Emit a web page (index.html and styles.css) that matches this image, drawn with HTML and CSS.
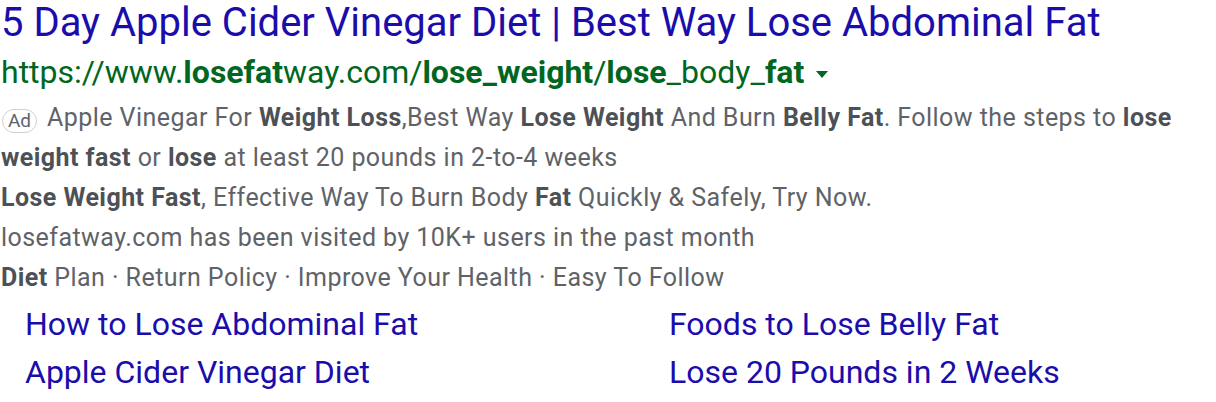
FILE: index.html
```html
<!DOCTYPE html>
<html>
<head>
<meta charset="utf-8">
<link rel="stylesheet" href="styles.css">
</head>
<body>
<div class="ad">
  <div class="title">5 Day Apple Cider Vinegar Diet | Best Way Lose Abdominal Fat</div>
  <div class="url">https://www.<b>losefat</b>way.com/<b>lose_weight</b>/<b>lose</b>_body_<b>fat</b><svg class="arrow" width="12" height="7" viewBox="0 0 12 7"><path d="M0 0H12L6 7Z" fill="#006621"/></svg></div>
  <div class="desc">
    <div class="line"><span class="badge">Ad</span>Apple Vinegar For <b>Weight Loss</b>,Best Way <b>Lose Weight</b> And Burn <b>Belly Fat</b>. Follow the steps to <b>lose</b></div>
    <div class="line"><b>weight fast</b> or <b>lose</b> at least 20 pounds in 2-to-4 weeks</div>
    <div class="line"><b>Lose Weight Fast</b>, Effective Way To Burn Body <b>Fat</b> Quickly &amp; Safely, Try Now.</div>
    <div class="line">losefatway.com has been visited by 10K+ users in the past month</div>
    <div class="line"><b>Diet</b> Plan · Return Policy · Improve Your Health · Easy To Follow</div>
  </div>
  <div class="sitelinks">
    <a>How to Lose Abdominal Fat</a>
    <a>Foods to Lose Belly Fat</a>
    <a>Apple Cider Vinegar Diet</a>
    <a>Lose 20 Pounds in 2 Weeks</a>
  </div>
</div>
</body>
</html>
```

FILE: styles.css
```css
html, body {
  margin: 0;
  padding: 0;
  background: #fff;
}
body {
  font-family: Roboto, "Noto Sans", Arial, sans-serif;
}
.ad {
  padding: 0 0 0 1px;
}
.title {
  color: #1a0dab;
  font-size: 40px;
  line-height: 46px;
  white-space: nowrap;
}
.url {
  color: #006621;
  font-size: 32px;
  line-height: 52px;
  white-space: nowrap;
  display: flex;
  align-items: center;
}
.url b {
  font-weight: 700;
}
.arrow {
  margin-left: 12px;
  margin-top: 4px;
}
.desc {
  color: #5f6368;
  font-size: 25px;
  letter-spacing: 0.45px;
}
.desc b {
  color: #4d5156;
  font-weight: 700;
}
.line {
  line-height: 40px;
  white-space: nowrap;
}
.badge {
  display: inline-block;
  box-sizing: border-box;
  width: 35px;
  height: 24px;
  border: 1px solid #cfcfcf;
  border-radius: 12px;
  font-size: 19px;
  line-height: 22px;
  text-align: center;
  letter-spacing: 0;
  margin-right: 10px;
  margin-left: 1px;
  color: #5f6368;
  vertical-align: -1px;
}
.sitelinks {
  display: grid;
  grid-template-columns: 644px 1fr;
  padding-left: 24px;
  font-size: 32px;
  line-height: 48px;
  color: #1a0dab;
  margin-top: 2px;
}
.sitelinks a {
  color: #1a0dab;
  text-decoration: none;
}
```
